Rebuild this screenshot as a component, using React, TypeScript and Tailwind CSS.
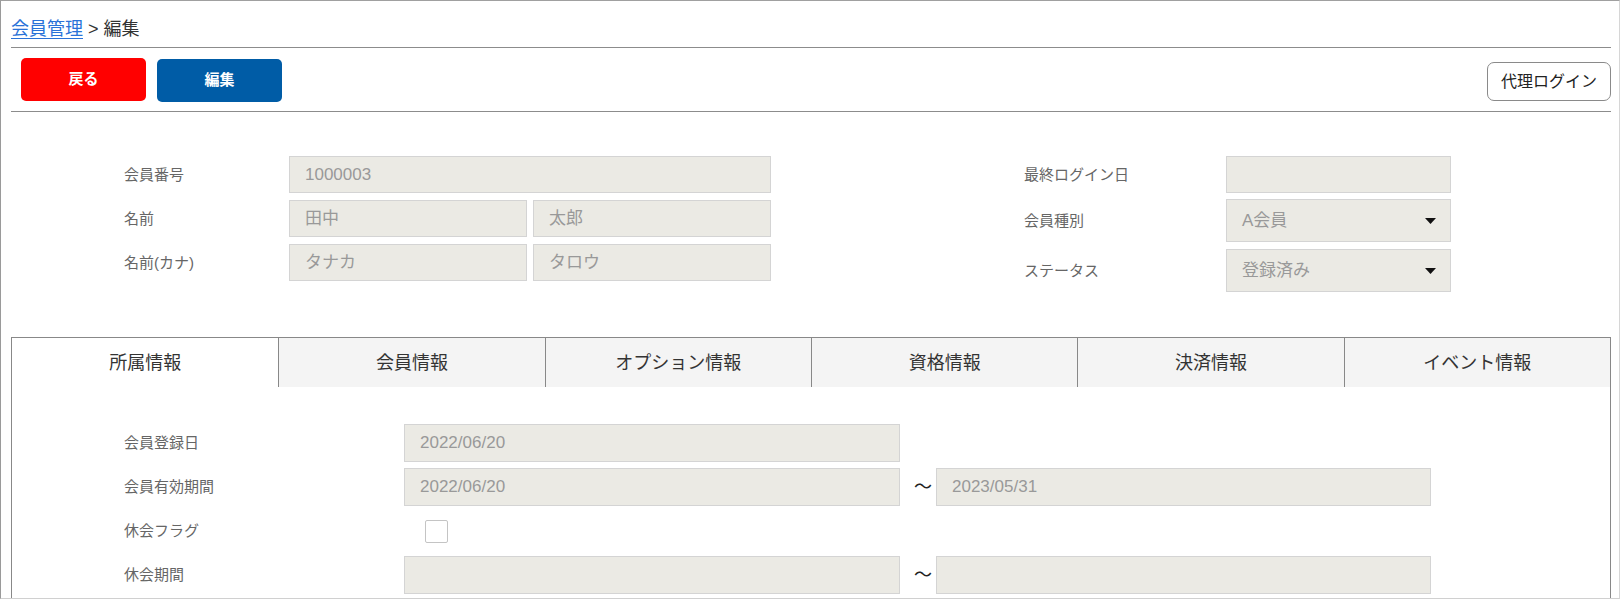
import React from "react";

function Field({
  w,
  h = "h-[37px]",
  value,
  select,
}: {
  w: string;
  h?: string;
  value?: string;
  select?: boolean;
}) {
  return (
    <div
      className={`relative flex items-center border border-[#d4d4d4] bg-[#ebeae4] px-[15px] text-[17px] leading-[20px] text-[#999] ${w} ${h}`}
    >
      <span>{value}</span>
      {select && (
        <svg
          className="absolute right-[14px] top-1/2 -translate-y-1/2"
          width="11"
          height="6"
          viewBox="0 0 11 6"
        >
          <path d="M0 0H11L5.5 6Z" fill="#111" />
        </svg>
      )}
    </div>
  );
}

function Label({ w, children }: { w: string; children: React.ReactNode }) {
  return (
    <div className={`flex items-center text-[15px] leading-[20px] text-[#666] ${w}`}>
      {children}
    </div>
  );
}

export default function App() {
  const tabs = ["所属情報", "会員情報", "オプション情報", "資格情報", "決済情報", "イベント情報"];
  return (
    <div className="h-[599px] w-[1620px] overflow-hidden border-b border-l border-r border-t border-b-[#d0d0d0] border-l-[#9a9a9a] border-r-[#d6d6d6] border-t-[#a0a0a0] bg-white font-['Liberation_Sans','Noto_Sans_CJK_JP',sans-serif]">
      <div className="ml-[10px] w-[1600px]">
        {/* breadcrumb */}
        <div className="h-[47px] border-b border-[#8c8c8c] pt-[17px] text-[18px] leading-[22px] text-[#333]">
          <a className="text-[#2a72d8] underline underline-offset-[3px]">会員管理</a>
          <span> &gt; 編集</span>
        </div>

        {/* action buttons */}
        <div className="flex h-[64px] items-start border-b border-[#8c8c8c] pt-[10px]">
          <button className="ml-[10px] flex h-[43px] w-[125px] items-center justify-center rounded-[5px] bg-[#ff0000] text-[15px] font-bold text-white">
            戻る
          </button>
          <button className="ml-[11px] mt-[1px] flex h-[43px] w-[125px] items-center justify-center rounded-[5px] bg-[#005ca6] text-[15px] font-bold text-white">
            編集
          </button>
          <div className="flex-1" />
          <button className="mt-[4px] flex h-[39px] w-[124px] items-center justify-center rounded-[7px] border border-[#8a8a8a] bg-white text-[16px] text-[#222]">
            代理ログイン
          </button>
        </div>

        {/* header form */}
        <div className="flex h-[225px] pt-[44px]">
          <div className="ml-[113px] flex flex-col gap-[7px]">
            <div className="flex h-[37px]">
              <Label w="w-[165px]">会員番号</Label>
              <Field w="w-[482px]" value="1000003" />
            </div>
            <div className="flex h-[37px]">
              <Label w="w-[165px]">名前</Label>
              <div className="flex gap-[6px]">
                <Field w="w-[238px]" value="田中" />
                <Field w="w-[238px]" value="太郎" />
              </div>
            </div>
            <div className="flex h-[37px]">
              <Label w="w-[165px]">名前(カナ)</Label>
              <div className="flex gap-[6px]">
                <Field w="w-[238px]" value="タナカ" />
                <Field w="w-[238px]" value="タロウ" />
              </div>
            </div>
          </div>
          <div className="ml-[253px] flex flex-col">
            <div className="flex h-[37px]">
              <Label w="w-[202px]">最終ログイン日</Label>
              <Field w="w-[225px]" />
            </div>
            <div className="mt-[6px] flex h-[43px]">
              <Label w="w-[202px]">会員種別</Label>
              <Field w="w-[225px]" h="h-[43px]" value="A会員" select />
            </div>
            <div className="mt-[7px] flex h-[43px]">
              <Label w="w-[202px]">ステータス</Label>
              <Field w="w-[225px]" h="h-[43px]" value="登録済み" select />
            </div>
          </div>
        </div>

        {/* tabs */}
        <div className="h-[400px] border border-[#888]">
          <div className="grid h-[49px] grid-cols-6">
            {tabs.map((t, i) => (
              <div
                key={t}
                className={`flex items-center justify-center text-[18px] leading-[22px] text-[#333] ${
                  i === 0 ? "bg-white" : "border-l border-[#888] bg-[#f4f4f4]"
                }`}
              >
                {t}
              </div>
            ))}
          </div>
          <div className="flex flex-col gap-[6px] pl-[112px] pt-[37px]">
            <div className="flex h-[38px]">
              <Label w="w-[280px]">会員登録日</Label>
              <Field w="w-[496px]" h="h-[38px]" value="2022/06/20" />
            </div>
            <div className="flex h-[38px]">
              <Label w="w-[280px]">会員有効期間</Label>
              <Field w="w-[496px]" h="h-[38px]" value="2022/06/20" />
              <div className="flex w-[36px] items-center pl-[14px] text-[18px] leading-[22px] text-[#222]">〜</div>
              <Field w="w-[495px]" h="h-[38px]" value="2023/05/31" />
            </div>
            <div className="flex h-[38px]">
              <Label w="w-[280px]">休会フラグ</Label>
              <div className="flex items-center pl-[21px]">
                <div className="h-[23px] w-[23px] rounded-[2px] border border-[#c4c4c4] bg-white" />
              </div>
            </div>
            <div className="flex h-[38px]">
              <Label w="w-[280px]">休会期間</Label>
              <Field w="w-[496px]" h="h-[38px]" />
              <div className="flex w-[36px] items-center pl-[14px] text-[18px] leading-[22px] text-[#222]">〜</div>
              <Field w="w-[495px]" h="h-[38px]" />
            </div>
          </div>
        </div>
      </div>
    </div>
  );
}
